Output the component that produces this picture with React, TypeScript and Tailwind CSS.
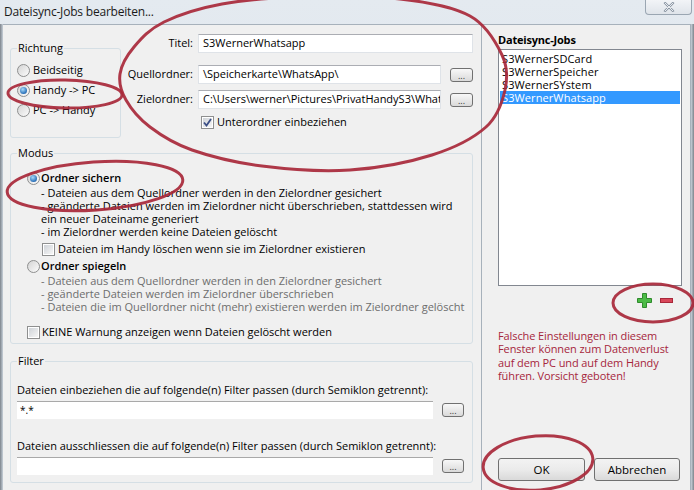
import React from "react";

type Pt = [number, number];

function loopPath(pts: Pt[]): string {
  const n = pts.length;
  let d = `M ${pts[0][0]} ${pts[0][1]}`;
  for (let i = 0; i < n; i++) {
    const p0 = pts[(i - 1 + n) % n];
    const p1 = pts[i];
    const p2 = pts[(i + 1) % n];
    const p3 = pts[(i + 2) % n];
    const c1x = p1[0] + (p2[0] - p0[0]) / 6;
    const c1y = p1[1] + (p2[1] - p0[1]) / 6;
    const c2x = p2[0] - (p3[0] - p1[0]) / 6;
    const c2y = p2[1] - (p3[1] - p1[1]) / 6;
    d += ` C ${c1x} ${c1y} ${c2x} ${c2y} ${p2[0]} ${p2[1]}`;
  }
  return d + " Z";
}

function Radio({ checked }: { checked?: boolean }) {
  return (
    <span className="w-[13px] h-[13px] shrink-0 rounded-full border border-[#8e8f8f] bg-linear-to-br from-[#d4d4d4] to-[#fcfcfc] flex items-center justify-center">
      {checked && (
        <span className="w-[7px] h-[7px] rounded-full bg-[radial-gradient(circle_at_40%_35%,#a8dcfb,#2a6fb8_70%,#1b4f8a)]" />
      )}
    </span>
  );
}

function Check({ checked }: { checked?: boolean }) {
  return (
    <span className="w-[13px] h-[13px] shrink-0 border border-[#8e8f8f] bg-white flex items-center justify-center">
      <span className="w-[9px] h-[9px] bg-linear-to-br from-[#cfd3d8] to-[#f6f6f6] flex items-center justify-center">
        {checked && (
          <svg width="9" height="9" viewBox="0 0 9 9">
            <path d="M1 4.5 L3.5 7.5 L8 1" fill="none" stroke="#3c4f86" strokeWidth="1.8" />
          </svg>
        )}
      </span>
    </span>
  );
}

function Dots({ w = 23 }: { w?: number }) {
  return (
    <span
      className={`${w === 23 ? "w-[23px]" : "w-[22px]"} h-[14px] shrink-0 rounded-[3px] border border-[#707070] bg-linear-to-b from-[#f8f8f8] to-[#dadada] flex items-end justify-center text-[9px] leading-[10px] text-[#333]`}
    >
      ...
    </span>
  );
}

function TextBox({ value, cls }: { value: string; cls: string }) {
  return (
    <div
      className={`${cls} h-[19px] bg-white border border-[#dfe3e8] border-t-[#abadb3] flex items-center px-[4px] overflow-hidden whitespace-nowrap`}
    >
      {value}
    </div>
  );
}

function Btn({ label, cls }: { label: string; cls: string }) {
  return (
    <div
      className={`${cls} h-[23px] rounded-[3px] border border-[#707070] bg-linear-to-b from-[#f3f3f3] via-[#ebebeb] to-[#d9d9d9] flex items-center justify-center text-[11.5px]`}
    >
      {label}
    </div>
  );
}

export default function App() {
  const bigLoop = loopPath([
    [300, -3],
    [400, -1],
    [470, 16],
    [502, 55],
    [505, 90],
    [486, 127],
    [432, 155],
    [350, 170],
    [262, 166],
    [192, 150],
    [150, 127],
    [126, 100],
    [120, 74],
    [134, 47],
    [164, 22],
    [222, 4],
  ]);

  return (
    <div className="relative w-[694px] h-[490px] overflow-hidden bg-linear-to-b from-[#e4eaf0] to-[#d3dde7] font-['Open_Sans',sans-serif] text-[11px] text-black">
      {/* title bar */}
      <div className="h-[24px] flex justify-between items-start">
        <div className="pl-[4px] h-[24px] flex items-center text-[12px] text-[#1a1a1a] tracking-[-0.2px]">
          Dateisync-Jobs bearbeiten...
        </div>
        <div className="mr-[2px] w-[47px] h-[15px] rounded-b-[4px] border border-t-0 border-[#9aa6b2] bg-linear-to-b from-[#f2f4f7] to-[#dfe4ea] flex items-center justify-center">
          <svg width="12" height="10" viewBox="0 0 12 10">
            <path d="M2 1 L10 9 M10 1 L2 9" stroke="#8b96a3" strokeWidth="2.4" strokeLinecap="round" />
            <path d="M2 1 L10 9 M10 1 L2 9" stroke="#f4f6f8" strokeWidth="0.9" strokeLinecap="round" />
          </svg>
        </div>
      </div>

      {/* body */}
      <div className="flex h-[466px]">
        <div className="w-[3px] bg-linear-to-r from-[#7d848c] to-[#c8d1da]" />

        {/* left panel */}
        <div className="w-[478px] border-t border-[#a7b1bb] bg-[#f0f0f0] pl-[7px] flex flex-col">
          {/* top section */}
          <div className="h-[121px] flex">
            <fieldset className="mt-[16px] w-[111px] h-[97px] border border-[#d5dfe5] rounded-[3px]">
              <legend className="ml-[6px] px-[1px] leading-[14px]">Richtung</legend>
              <div className="pt-[8px] pl-[6px] flex flex-col gap-[5px]">
                <div className="h-[15px] flex items-center gap-[3px]">
                  <Radio />
                  <span>Beidseitig</span>
                </div>
                <div className="h-[15px] flex items-center gap-[3px]">
                  <Radio checked />
                  <span>Handy -&gt; PC</span>
                </div>
                <div className="h-[15px] flex items-center gap-[3px]">
                  <Radio />
                  <span>PC -&gt; Handy</span>
                </div>
              </div>
            </fieldset>

            <div className="pt-[9px] flex flex-col">
              <div className="h-[19px] flex items-center">
                <span className="w-[72px] text-right">Titel:</span>
                <TextBox cls="ml-[5px] w-[275px]" value="S3WernerWhatsapp" />
              </div>
              <div className="mt-[12px] h-[19px] flex items-center">
                <span className="w-[72px] text-right">Quellordner:</span>
                <TextBox cls="ml-[5px] w-[243px]" value="\Speicherkarte\WhatsApp\" />
                <span className="ml-[9px]">
                  <Dots />
                </span>
              </div>
              <div className="mt-[6px] h-[19px] flex items-center">
                <span className="w-[72px] text-right">Zielordner:</span>
                <TextBox cls="ml-[5px] w-[243px]" value="C:\Users\werner\Pictures\PrivatHandyS3\What" />
                <span className="ml-[9px]">
                  <Dots />
                </span>
              </div>
              <div className="mt-[6px] h-[14px] pl-[80px] flex items-center gap-[3px]">
                <Check checked />
                <span>Unterordner einbeziehen</span>
              </div>
            </div>
          </div>

          {/* Modus */}
          <fieldset className="w-[463px] h-[198px] border border-[#d5dfe5] rounded-[3px]">
            <legend className="ml-[6px] px-[1px] leading-[14px]">Modus</legend>
            <div className="pl-[16px] pt-[11px] flex flex-col">
              <div className="h-[15px] flex items-center gap-[1px]">
                <Radio checked />
                <span className="font-semibold">Ordner sichern</span>
              </div>
              <div className="pl-[14px] leading-[13px]">
                <div>- Dateien aus dem Quellordner werden in den Zielordner gesichert</div>
                <div>- geänderte Dateien werden im Zielordner nicht überschrieben, stattdessen wird</div>
                <div>ein neuer Dateiname generiert</div>
                <div>- im Zielordner werden keine Dateien gelöscht</div>
              </div>
              <div className="mt-[4px] h-[14px] pl-[15px] flex items-center gap-[3px]">
                <Check />
                <span>Dateien im Handy löschen wenn sie im Zielordner existieren</span>
              </div>
              <div className="mt-[3px] h-[15px] flex items-center gap-[1px]">
                <Radio />
                <span className="font-semibold">Ordner spiegeln</span>
              </div>
              <div className="pl-[14px] leading-[13px] text-[#6d6d6d]">
                <div>- Dateien aus dem Quellordner werden in den Zielordner gesichert</div>
                <div>- geänderte Dateien werden im Zielordner überschrieben</div>
                <div>- Dateien die im Quellordner nicht (mehr) existieren werden im Zielordner gelöscht</div>
              </div>
              <div className="mt-[12px] h-[14px] flex items-center gap-[2px]">
                <Check />
                <span>KEINE Warnung anzeigen wenn Dateien gelöscht werden</span>
              </div>
            </div>
          </fieldset>

          {/* Filter */}
          <fieldset className="mt-[10px] w-[463px] h-[129px] border border-[#d5dfe5] rounded-[3px]">
            <legend className="ml-[6px] px-[1px] leading-[14px]">Filter</legend>
            <div className="pl-[6px] flex flex-col">
              <div className="mt-[15px] leading-[14px]">
                Dateien einbeziehen die auf folgende(n) Filter passen (durch Semiklon getrennt):
              </div>
              <div className="mt-[4px] h-[18px] flex items-center">
                <div className="w-[416px] h-[18px] bg-white border-t border-[#a9a9a9] flex items-center px-[3px] text-[10px]">
                  *.*
                </div>
                <span className="ml-[9px]">
                  <Dots w={22} />
                </span>
              </div>
              <div className="mt-[20px] leading-[14px]">
                Dateien ausschliessen die auf folgende(n) Filter passen (durch Semiklon getrennt):
              </div>
              <div className="mt-[4px] h-[18px] flex items-center">
                <div className="w-[416px] h-[18px] bg-white border-t border-[#a9a9a9]" />
                <span className="ml-[9px]">
                  <Dots w={22} />
                </span>
              </div>
            </div>
          </fieldset>
        </div>

        {/* right panel */}
        <div className="w-[210px] border-t border-l border-r border-[#a7b1bb] bg-[#f0f0f0] pl-[16px] flex flex-col">
          <div className="pt-[8px] leading-[14px] font-bold tracking-[-0.2px]">Dateisync-Jobs</div>
          <div className="mt-[2px] w-[184px] h-[237px] border border-[#828790] bg-white pt-[2px] px-[1px] text-[11px] tracking-[0.1px]">
            <div className="h-[13px] leading-[13px] px-[2px]">S3WernerSDCard</div>
            <div className="h-[13px] leading-[13px] px-[2px]">S3WernerSpeicher</div>
            <div className="h-[13px] leading-[13px] px-[2px]">S3WernerSYstem</div>
            <div className="h-[13px] leading-[13px] px-[2px] bg-[#3399ff] text-white">S3WernerWhatsapp</div>
          </div>
          <div className="mt-[7px] h-[15px] pr-[17px] flex justify-end items-center gap-[8px]">
            <svg width="15" height="15" viewBox="0 0 15 15">
              <path d="M5.5 0.5 H9.5 V5.5 H14.5 V9.5 H9.5 V14.5 H5.5 V9.5 H0.5 V5.5 H5.5 Z" fill="#4cbb47" stroke="#2f8a2c" strokeWidth="1" />
            </svg>
            <svg width="13" height="5" viewBox="0 0 13 5">
              <rect x="0.5" y="0.5" width="12" height="4" fill="#d9475a" stroke="#a8283a" strokeWidth="1" />
            </svg>
          </div>
          <div className="mt-[21px] leading-[13.4px] text-[#a6263c] tracking-[-0.1px]">
            <div>Falsche Einstellungen in diesem</div>
            <div>Fenster können zum Datenverlust</div>
            <div>auf dem PC und auf dem Handy</div>
            <div>führen. Vorsicht geboten!</div>
          </div>
          <div className="mt-auto pb-[9px] flex gap-[9px]">
            <Btn label="OK" cls="w-[87px]" />
            <Btn label="Abbrechen" cls="w-[86px]" />
          </div>
        </div>

        <div className="w-[3px] bg-linear-to-r from-[#c8d1da] to-[#7d848c]" />
      </div>

      {/* red annotation marks */}
      <svg className="absolute inset-0 pointer-events-none" width="694" height="490" viewBox="0 0 694 490">
        <g fill="none" stroke="#a8283a" strokeWidth="3" strokeOpacity="0.92">
          <path d={bigLoop} />
          <ellipse cx="65" cy="94" rx="57" ry="14" transform="rotate(1 65 94)" />
          <ellipse cx="95" cy="186" rx="88" ry="24" transform="rotate(-4 95 186)" />
          <ellipse cx="653" cy="303" rx="40" ry="19" />
          <ellipse cx="538" cy="463" rx="55" ry="27" transform="rotate(-5 538 463)" />
        </g>
      </svg>
    </div>
  );
}
